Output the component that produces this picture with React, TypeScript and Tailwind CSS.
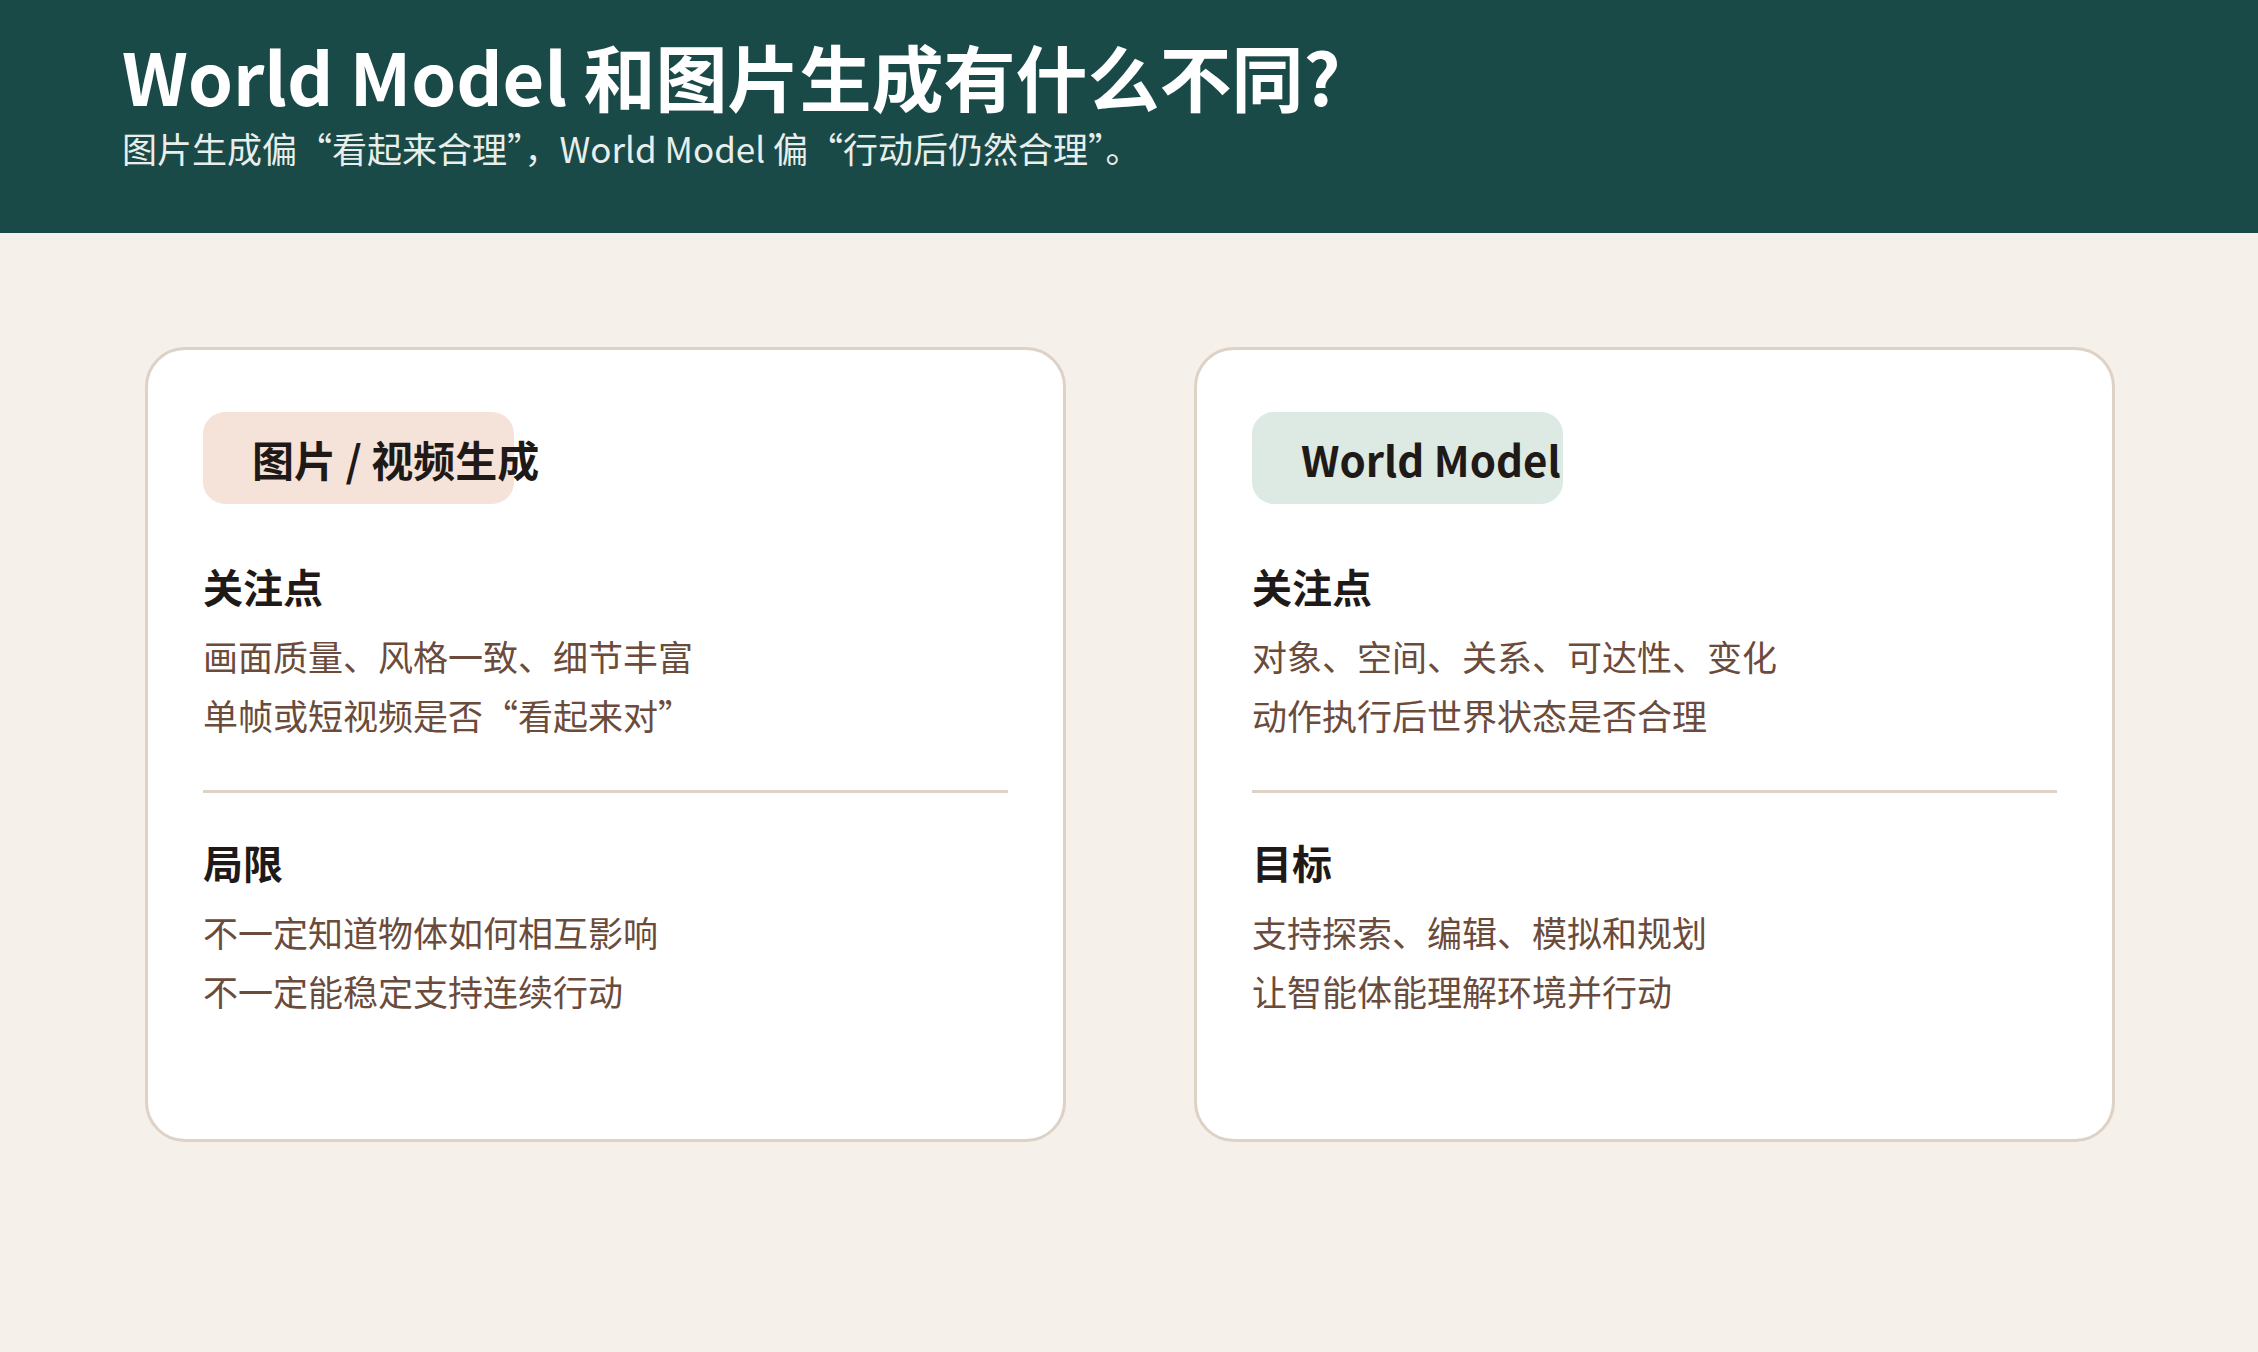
import React from "react";

const font = { fontFamily: '"Noto Sans CJK SC", "Noto Sans", sans-serif' };

function Card({ badge, badgeBg, h1, l1, h2, l2 }: { badge: string; badgeBg: string; h1: string; l1: string[]; h2: string; l2: string[] }) {
  return (
    <div className="w-[921px] h-[795px] rounded-[40px] border-[3px] border-[#ddd2c5] bg-white px-[55px] pt-[62px]">
      <div className={`w-[311px] h-[92px] rounded-[22px] ${badgeBg} flex items-center pl-[49px] whitespace-nowrap text-[42px] font-bold text-[#1f1a17]`}>{badge}</div>
      <div className="mt-[58px] text-[40px] leading-[48px] font-bold text-[#1f1a17]">{h1}</div>
      <div className="mt-[16px] text-[35px] leading-[59px] text-[#6b4b3b]">
        {l1.map((t) => <div key={t}>{t}</div>)}
      </div>
      <div className="mt-[46px] h-[3px] bg-[#ddd2c5]" />
      <div className="mt-[45px] text-[40px] leading-[48px] font-bold text-[#1f1a17]">{h2}</div>
      <div className="mt-[16px] text-[35px] leading-[59px] text-[#6b4b3b]">
        {l2.map((t) => <div key={t}>{t}</div>)}
      </div>
    </div>
  );
}

export default function App() {
  return (
    <div style={font} className="min-h-[1352px] bg-[#f5f0e9]">
      <div className="h-[233px] bg-[#1a4a47] pl-[122px] pt-[32px]">
        <div className="text-[72px] leading-[86px] font-bold text-white">World Model 和图片生成有什么不同?</div>
        <div className="mt-[8px] text-[35px] leading-[44px] text-[#e8eeec]">图片生成偏“看起来合理”，World Model 偏“行动后仍然合理”。</div>
      </div>
      <div className="flex gap-[128px] pl-[145px] pt-[114px]">
        <Card badge="图片 / 视频生成" badgeBg="bg-[#f5e3d9]" h1="关注点" l1={["画面质量、风格一致、细节丰富", "单帧或短视频是否“看起来对”"]} h2="局限" l2={["不一定知道物体如何相互影响", "不一定能稳定支持连续行动"]} />
        <Card badge="World Model" badgeBg="bg-[#dde9e3]" h1="关注点" l1={["对象、空间、关系、可达性、变化", "动作执行后世界状态是否合理"]} h2="目标" l2={["支持探索、编辑、模拟和规划", "让智能体能理解环境并行动"]} />
      </div>
    </div>
  );
}
